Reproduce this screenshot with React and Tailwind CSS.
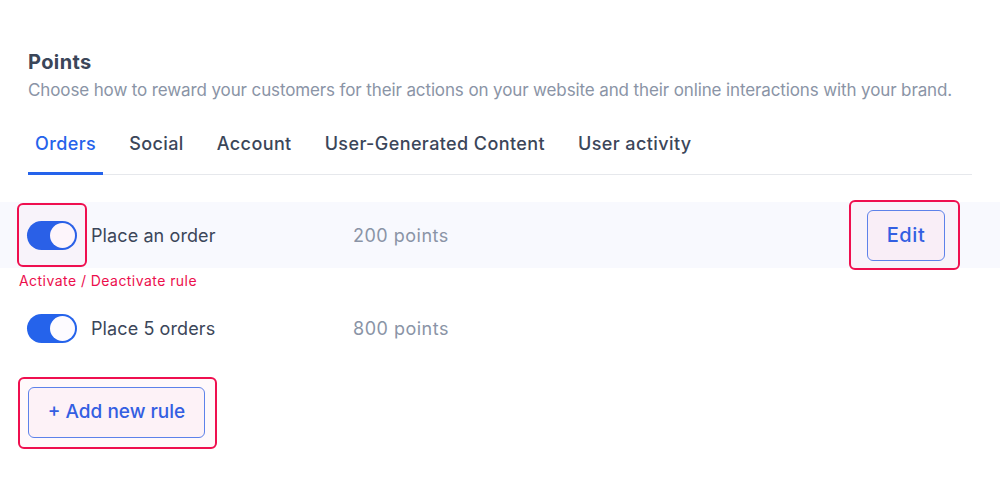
import React from "react";

function Toggle() {
  return (
    <div className="w-[50px] h-[29px] rounded-full bg-[#2563eb] flex items-center justify-end px-[2px] shrink-0">
      <div className="w-[25px] h-[25px] rounded-full bg-[#fdfbff]" />
    </div>
  );
}

function Annot({ className }) {
  return (
    <div
      className={
        "absolute border-2 border-[#ef0f4f] rounded-[6px] bg-[rgba(240,20,80,0.025)] pointer-events-none " +
        className
      }
    />
  );
}

export default function App() {
  const tabs = ["Orders", "Social", "Account", "User-Generated Content", "User activity"];
  return (
    <div
      className="w-[1000px] h-[486px] bg-white overflow-hidden"
      style={{ fontFamily: "Inter, 'Noto Sans', sans-serif" }}
    >
      <div className="px-[28px] pt-[48px]">
        <h1 className="text-[20px] leading-[28px] font-bold text-[#3b4659] tracking-[0.4px]">Points</h1>
        <p className="text-[17px] leading-[26px] text-[#8a94a6] mt-[1px] tracking-[-0.12px] whitespace-nowrap">
          Choose how to reward your customers for their actions on your website and their online interactions with your brand.
        </p>
        <div className="mt-[16px] flex gap-[19px] border-b border-[#e6e8ec]">
          {tabs.map((t, i) => (
            <div
              key={t}
              className={
                "px-[7px] pt-[11px] pb-[14px] text-[18px] leading-[28px] font-medium tracking-[0.4px] border-b-[3px] -mb-px " +
                (i === 0 ? "text-[#2563eb] border-[#2563eb]" : "text-[#3b4659] border-transparent")
              }
            >
              {t}
            </div>
          ))}
        </div>
      </div>

      <div className="mt-[27px] bg-[#f8f9fe] h-[66px] flex items-center px-[27px]">
        <div className="relative">
          <Toggle />
          <Annot className="-left-[10px] -right-[10px] -top-[18px] -bottom-[17px]" />
        </div>
        <div className="ml-[14px] w-[262px] text-[18px] text-[#3b4659] tracking-[0.1px]">Place an order</div>
        <div className="text-[18px] text-[#8a94a6] tracking-[0.5px]">200 points</div>
        <div className="ml-auto mr-[28px] relative">
          <button className="w-[78px] h-[51px] rounded-[6px] border border-[#5a86ee] bg-[#f9f4fb] text-[#2f62e6] text-[20px] font-medium tracking-[0.6px]">
            Edit
          </button>
          <Annot className="-left-[18px] -right-[15px] -top-[10px] -bottom-[9px]" />
        </div>
      </div>
      <div className="px-[19px] pt-[3px] text-[14px] leading-[20px] text-[#ec0e4c] tracking-[0.45px]">
        Activate / Deactivate rule
      </div>

      <div className="mt-[20px] h-[34px] flex items-center px-[27px]">
        <Toggle />
        <div className="ml-[14px] w-[262px] text-[18px] text-[#3b4659] tracking-[0.1px]">Place 5 orders</div>
        <div className="text-[18px] text-[#8a94a6] tracking-[0.5px]">800 points</div>
      </div>

      <div className="mt-[42px] px-[28px]">
        <div className="relative inline-block">
          <button className="w-[177px] h-[51px] rounded-[6px] border border-[#5a86ee] bg-[#fdf8fb] text-[#2f62e6] text-[19px] font-medium tracking-[0px]">
            + Add new rule
          </button>
          <Annot className="-left-[10px] -right-[12px] -top-[10px] -bottom-[11px]" />
        </div>
      </div>
    </div>
  );
}
